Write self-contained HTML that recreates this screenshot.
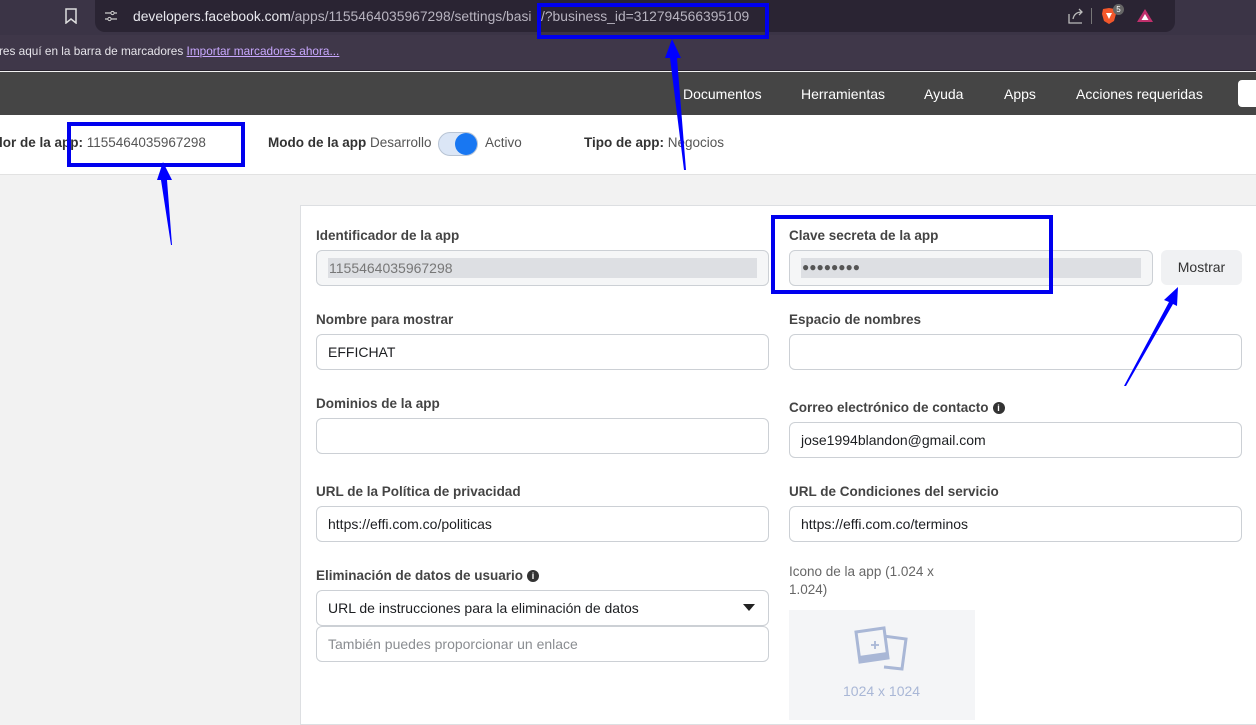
<!DOCTYPE html>
<html><head><meta charset="utf-8">
<style>
*{box-sizing:border-box;margin:0;padding:0}
body{width:1256px;height:719px;overflow:hidden;position:relative;background:#f2f2f2;font-family:"Liberation Sans",sans-serif;}
.a{position:absolute}
.top{left:0;top:0;width:1256px;height:35px;background:#3b3446}
.url{left:95px;top:0;width:1080px;height:32px;background:#2a2433;border-radius:0 0 10px 10px}
.bm{left:0;top:35px;width:1256px;height:36px;background:#3f3749;border-bottom:1px solid #2a2530}
.nav{left:0;top:72px;width:1256px;height:43px;background:#454545}
.nav span{position:absolute;top:14px;color:#fff;font-size:14px}
.sub{left:0;top:115px;width:1256px;height:60px;background:#fff;border-bottom:1px solid #e2e2e2}
.card{left:300px;top:205px;width:960px;height:520px;background:#fff;border:1px solid #dddfe2}
.lbl{position:absolute;font-size:13.5px;font-weight:bold;color:#444}
.in{position:absolute;height:36px;border:1px solid #ccd0d5;border-radius:6px;background:#fff;font-size:14px;color:#1c1e21;padding:9px 11px}
.dis{background:#f5f6f7}
.dis div{position:absolute;left:11px;right:11px;top:7px;height:20px;background:#dddfe3;color:#777;padding:2px 1px}
.box{position:absolute;border:4px solid #0000ee}
.info{display:inline-block;width:12px;height:12px;border-radius:50%;background:#333;color:#fff;font-size:9px;text-align:center;line-height:12px;font-weight:bold;vertical-align:1px;margin-left:4px}
</style></head><body>
<div class="a top"></div>
<div class="a url"></div>
<svg class="a" style="left:64px;top:8px" width="14" height="16" viewBox="0 0 14 16"><path d="M2 1h10v14l-5-4-5 4z" fill="none" stroke="#ddd" stroke-width="1.5"/></svg>
<svg class="a" style="left:104px;top:10px" width="14" height="12" viewBox="0 0 14 12"><path d="M1 3h6M10 3h3M1 9h3M7 9h6" stroke="#ccc" stroke-width="1.3"/><circle cx="8.5" cy="3" r="1.6" fill="none" stroke="#ccc"/><circle cx="5.5" cy="9" r="1.6" fill="none" stroke="#ccc"/></svg>
<div class="a" style="left:133px;top:8px;font-size:13.85px;color:#e8e8ee">developers.facebook.com<span style="color:#b8b4c0">/apps/1155464035967298/settings/basi</span></div>
<div class="a" style="left:541px;top:8px;font-size:13.85px;color:#b8b4c0">/?business_id=312794566395109</div>
<svg class="a" style="left:1067px;top:8px" width="18" height="16" viewBox="0 0 18 16"><path d="M2 6v9h13M6 11c1-5 4-7 9-7M12 1l3 3-3 3" fill="none" stroke="#bbb" stroke-width="1.3"/></svg>
<div class="a" style="left:1091px;top:8px;width:1px;height:16px;background:#777"></div>
<svg class="a" style="left:1101px;top:7px" width="16" height="18" viewBox="0 0 16 18"><path d="M2 2l6-1 6 1 1 5-2 7-5 3-5-3-2-7z" fill="#f2572b"/><path d="M5 6h6l-3 6z" fill="#fff"/></svg>
<div class="a" style="left:1113px;top:4px;width:11px;height:11px;border-radius:50%;background:#666;color:#fff;font-size:8px;text-align:center;line-height:11px">5</div>
<svg class="a" style="left:1136px;top:8px" width="18" height="15" viewBox="0 0 18 15"><path d="M9 1l8 13H1z" fill="#c0306c"/><path d="M9 6l3.5 6h-7z" fill="#fff"/></svg>
<div class="a bm"></div>
<div class="a" style="left:-1px;top:44px;font-size:11.8px;color:#e6e4ea">res aquí en la barra de marcadores <span style="color:#c9a8ff;text-decoration:underline">Importar marcadores ahora...</span></div>
<div class="a nav"><span style="left:683px">Documentos</span><span style="left:801px">Herramientas</span><span style="left:924px">Ayuda</span><span style="left:1004px">Apps</span><span style="left:1076px">Acciones requeridas</span>
<div style="position:absolute;left:1238px;top:8px;width:30px;height:27px;background:#fff;border-radius:4px"></div></div>
<div class="a sub"></div>
<div class="a" style="left:-1px;top:135px;font-size:13.5px;color:#555"><b style="color:#333">lor de la app:</b> 1155464035967298</div>
<div class="a" style="left:268px;top:135px;font-size:13.5px;color:#555"><b style="color:#333">Modo de la app</b> Desarrollo</div>
<div class="a" style="left:438px;top:132px;width:40px;height:24px;border-radius:12px;background:#dbe6f6;border:1px solid #b8c4d4"></div>
<div class="a" style="left:455px;top:133px;width:22px;height:22px;border-radius:50%;background:#1877f2"></div>
<div class="a" style="left:485px;top:135px;font-size:13.5px;color:#555">Activo</div>
<div class="a" style="left:584px;top:135px;font-size:13.5px;color:#555"><b style="color:#333">Tipo de app:</b> Negocios</div>

<div class="a card"></div>
<div class="lbl" style="left:316px;top:228px">Identificador de la app</div>
<div class="in dis" style="left:316px;top:250px;width:453px"><div>1155464035967298</div></div>
<div class="lbl" style="left:789px;top:228px">Clave secreta de la app</div>
<div class="in dis" style="left:789px;top:250px;width:364px"><div style="color:#555;letter-spacing:0px;font-size:12px">●●●●●●●●</div></div>
<div class="a" style="left:1161px;top:250px;width:81px;height:35px;background:#f0f1f3;border-radius:6px;font-size:14px;color:#333;text-align:center;line-height:35px">Mostrar</div>
<div class="lbl" style="left:316px;top:312px">Nombre para mostrar</div>
<div class="in" style="left:316px;top:334px;width:453px">EFFICHAT</div>
<div class="lbl" style="left:789px;top:312px">Espacio de nombres</div>
<div class="in" style="left:789px;top:334px;width:453px"></div>
<div class="lbl" style="left:316px;top:396px">Dominios de la app</div>
<div class="in" style="left:316px;top:418px;width:453px"></div>
<div class="lbl" style="left:789px;top:400px">Correo electrónico de contacto<span class="info">i</span></div>
<div class="in" style="left:789px;top:422px;width:453px">jose1994blandon@gmail.com</div>
<div class="lbl" style="left:316px;top:484px">URL de la Política de privacidad</div>
<div class="in" style="left:316px;top:506px;width:453px">https://effi.com.co/politicas</div>
<div class="lbl" style="left:789px;top:484px">URL de Condiciones del servicio</div>
<div class="in" style="left:789px;top:506px;width:453px">https://effi.com.co/terminos</div>
<div class="lbl" style="left:316px;top:568px">Eliminación de datos de usuario<span class="info">i</span></div>
<div class="in" style="left:316px;top:590px;width:453px">URL de instrucciones para la eliminación de datos</div>
<div class="a" style="left:743px;top:604px;width:0;height:0;border-left:6px solid transparent;border-right:6px solid transparent;border-top:7px solid #222"></div>
<div class="in" style="left:316px;top:626px;width:453px;color:#8a8d91">También puedes proporcionar un enlace</div>
<div class="a" style="left:789px;top:563px;font-size:13.5px;color:#666;line-height:18px">Icono de la app (1.024 x<br>1.024)</div>
<div class="a" style="left:789px;top:610px;width:186px;height:110px;background:#f4f5f7"></div>
<svg class="a" style="left:853px;top:626px" width="56" height="50" viewBox="0 0 56 50"><path d="M30 10l23 3-4 30-18-2" fill="none" stroke="#a9b7d6" stroke-width="3"/><path d="M3 6l28-4 4 30-28 4z" fill="#f4f5f7" stroke="#a9b7d6" stroke-width="3"/><path d="M6 30l28-4 1 6-28 4z" fill="#a9b7d6"/><path d="M18 19h8M22 15v8" stroke="#a9b7d6" stroke-width="1.8"/></svg>
<div class="a" style="left:843px;top:683px;font-size:14px;color:#a9b7d6">1024 x 1024</div>

<div class="box" style="left:537px;top:3px;width:232px;height:36px"></div>
<div class="box" style="left:67px;top:122px;width:178px;height:45px"></div>
<div class="box" style="left:771px;top:215px;width:282px;height:79px"></div>
<svg class="a" style="left:0;top:0" width="1256" height="719"><g fill="#0000ff">
<polygon points="672,39 665,58 670,58 684,170 686,170 677,58 681,58"/>
<polygon points="163,162 157,180 161,180 171,245 172,245 167,180 172,180"/>
<polygon points="1178,287 1164,300 1169,302 1124,386 1126,386 1173,304 1177,306"/>
</g></svg>
</body></html>
